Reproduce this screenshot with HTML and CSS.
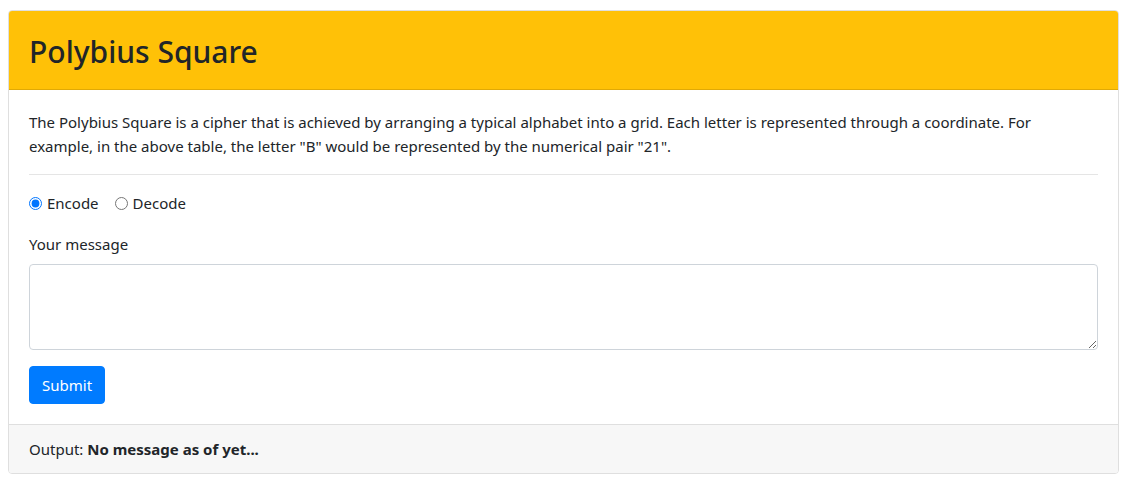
FILE: index.html
```html
<!DOCTYPE html>
<html>
<head>
<meta charset="utf-8">
<link rel="stylesheet" href="styles.css">
</head>
<body>
<div class="card">
  <div class="card-header">
    <h2 class="title">Polybius Square</h2>
  </div>
  <div class="card-body">
    <p class="intro">The Polybius Square is a cipher that is achieved by arranging a typical alphabet into a grid. Each letter is represented through a coordinate. For example, in the above table, the letter "B" would be represented by the numerical pair "21".</p>
    <hr class="divider">
    <form class="form">
      <div class="radios">
        <label class="radio"><input type="radio" name="mode" checked> Encode</label>
        <label class="radio"><input type="radio" name="mode"> Decode</label>
      </div>
      <div class="group">
        <label class="label" for="msg">Your message</label>
        <textarea id="msg" class="textarea" rows="3"></textarea>
      </div>
      <button type="button" class="btn">Submit</button>
    </form>
  </div>
  <div class="card-footer">Output: <strong>No message as of yet...</strong></div>
</div>
</body>
</html>
```
FILE: styles.css
```css
* { box-sizing: border-box; }
body {
  margin: 10px 8px 8px;
  font-family: "Noto Sans", "Open Sans", sans-serif;
  font-size: 15px;
  line-height: 24px;
  color: #212529;
  background: #fff;
}
.card {
  border: 1px solid #dfdfdf;
  border-radius: 4px;
  overflow: hidden;
}
.card-header {
  background: #ffc107;
  border-bottom: 1px solid #e0a906;
  height: 79px;
  padding: 0 20px;
  display: flex;
  align-items: center;
}
.title {
  margin: 0;
  font-size: 30px;
  font-weight: 500;
  line-height: 38px;
  padding-top: 4px;
}
.card-body {
  padding: 20px;
}
.intro { margin: 0; }
.divider {
  margin: 16px 0;
  border: 0;
  border-top: 1px solid #e5e5e5;
}
.form { margin: 0; }
.radios {
  display: flex;
  margin-bottom: 17px;
}
.radio {
  display: inline-flex;
  align-items: center;
  margin-right: 16px;
}
.radio input {
  margin: 0 5px 0 0;
  width: 13px;
  height: 13px;
}
.group { margin-bottom: 16px; }
.label {
  display: block;
  margin-bottom: 8px;
}
.textarea {
  display: block;
  width: 100%;
  height: 86px;
  border: 1px solid #ced4da;
  border-radius: 4px;
  padding: 6px 12px;
  font: inherit;
  resize: vertical;
}
.btn {
  display: block;
  background: #007bff;
  color: #fff;
  border: 1px solid #007bff;
  border-radius: 4px;
  height: 38px;
  padding: 0 12px;
  font: inherit;
}
.card-footer {
  background: #f7f7f7;
  border-top: 1px solid #dfdfdf;
  padding: 12px 20px;
  height: 49px;
}
.card-footer strong { font-weight: 700; }
```
